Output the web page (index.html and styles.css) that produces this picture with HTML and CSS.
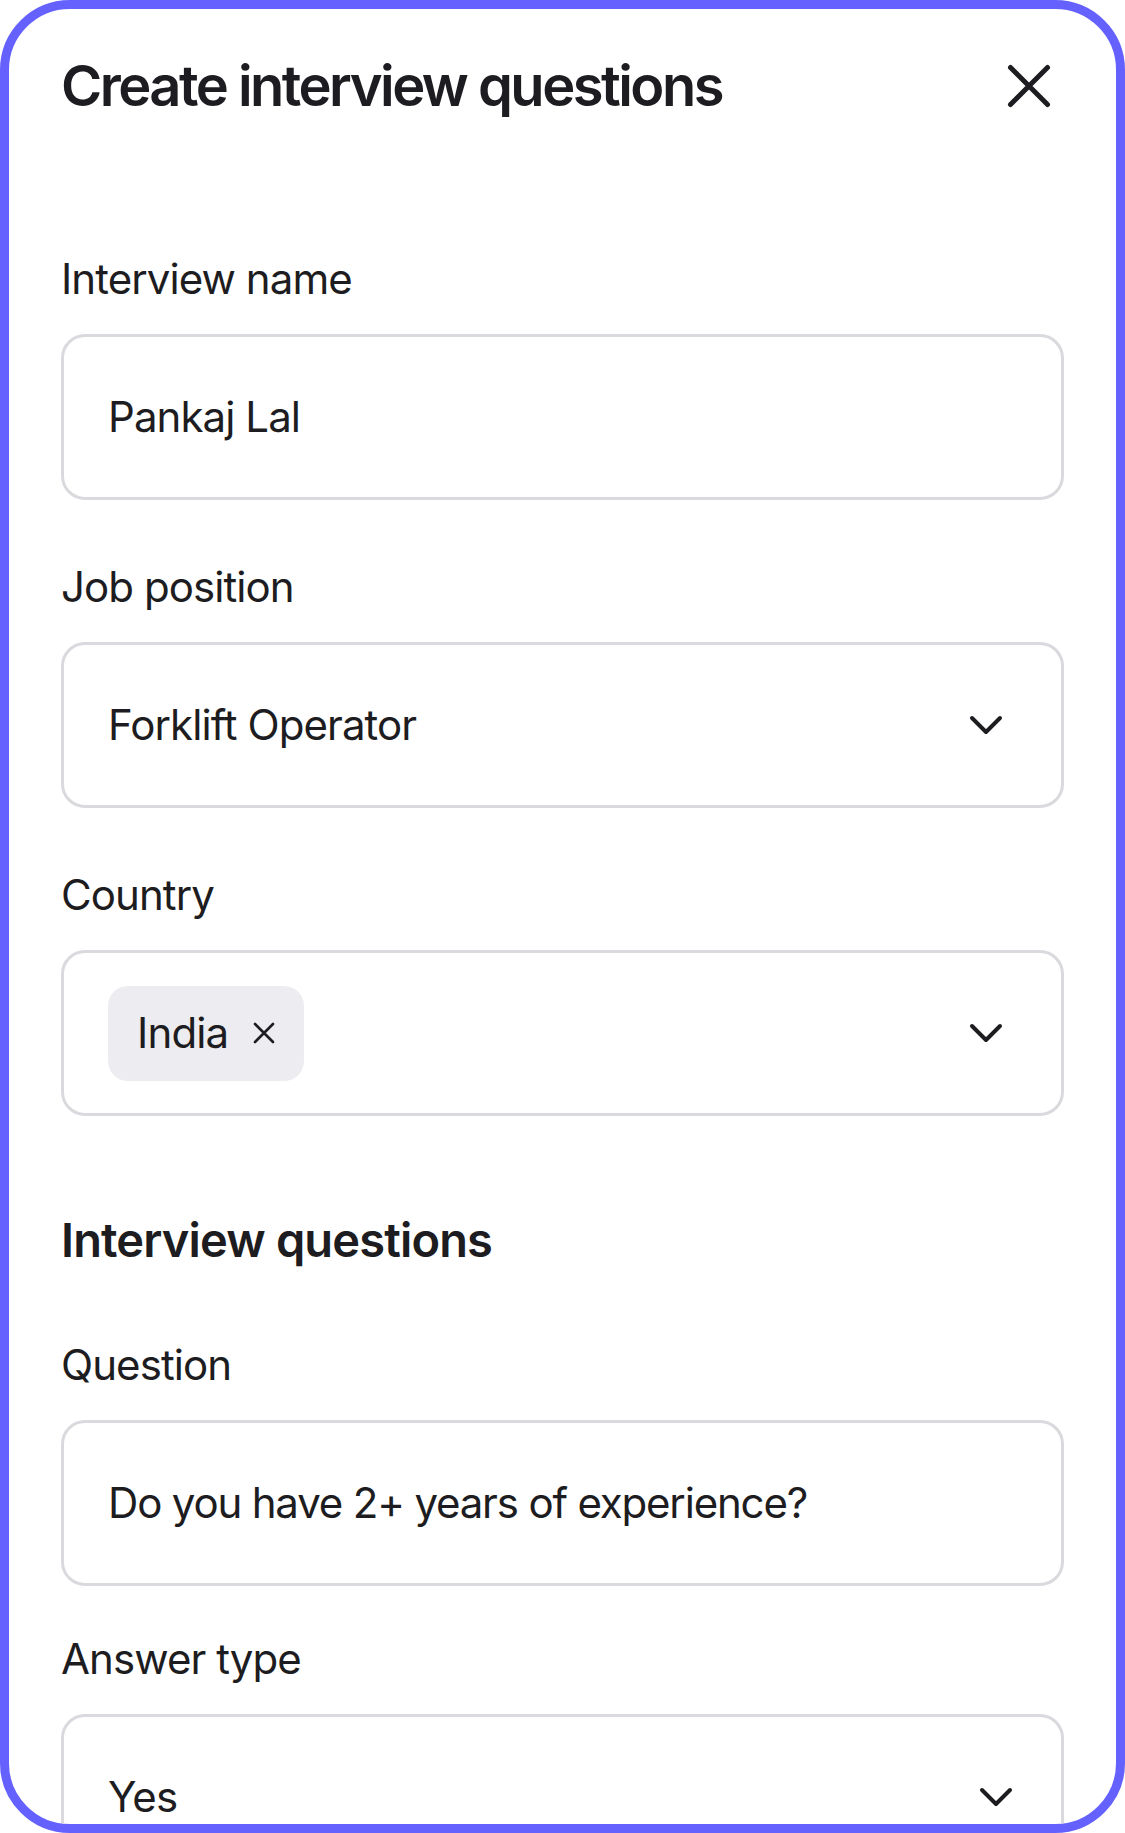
FILE: index.html
```html
<!DOCTYPE html>
<html lang="en">
<head>
<meta charset="utf-8">
<title>Create interview questions</title>
<link rel="stylesheet" href="styles.css">
</head>
<body>
<div class="frame">
  <header class="header">
    <h1 class="title">Create interview questions</h1>
    <svg class="close" viewBox="0 0 44 44" width="44" height="44" aria-label="Close">
      <path d="M3.5 3.5 L40.5 40.5 M40.5 3.5 L3.5 40.5" fill="none" stroke="#1d1c20" stroke-width="5" stroke-linecap="round"/>
    </svg>
  </header>

  <div class="field field-first">
    <div class="label">Interview name</div>
    <div class="box"><span class="value">Pankaj Lal</span></div>
  </div>

  <div class="field">
    <div class="label">Job position</div>
    <div class="box select">
      <span class="value">Forklift Operator</span>
      <svg class="chev" viewBox="0 0 34 20" width="34" height="20"><path d="M3 3 L17 17 L31 3" fill="none" stroke="#1d1c20" stroke-width="4" stroke-linecap="round" stroke-linejoin="round"/></svg>
    </div>
  </div>

  <div class="field">
    <div class="label">Country</div>
    <div class="box select">
      <span class="chip">
        <span class="chip-text">India</span>
        <svg class="chip-x" viewBox="0 0 22 22" width="22" height="22"><path d="M2 2 L20 20 M20 2 L2 20" fill="none" stroke="#1d1c20" stroke-width="2.6" stroke-linecap="round"/></svg>
      </span>
      <svg class="chev" viewBox="0 0 34 20" width="34" height="20"><path d="M3 3 L17 17 L31 3" fill="none" stroke="#1d1c20" stroke-width="4" stroke-linecap="round" stroke-linejoin="round"/></svg>
    </div>
  </div>

  <h2 class="section">Interview questions</h2>

  <div class="field field-q">
    <div class="label">Question</div>
    <div class="box"><span class="value value-q">Do you have 2+ years of experience?</span></div>
  </div>

  <div class="field field-a">
    <div class="label">Answer type</div>
    <div class="box select select-wide">
      <span class="value">Yes</span>
      <svg class="chev" viewBox="0 0 34 20" width="34" height="20"><path d="M3 3 L17 17 L31 3" fill="none" stroke="#1d1c20" stroke-width="4" stroke-linecap="round" stroke-linejoin="round"/></svg>
    </div>
  </div>
</div>
</body>
</html>
```

FILE: styles.css
```css
* { box-sizing: border-box; }

html, body {
  margin: 0;
  padding: 0;
  background: #ffffff;
}

body {
  font-family: "Inter", "Noto Sans", "Liberation Sans", sans-serif;
  color: #1d1c20;
}

.frame {
  width: 1125px;
  height: 1833px;
  border: 9px solid #6461ff;
  border-radius: 70px;
  overflow: hidden;
  background: #ffffff;
  padding: 43px 52px 0 52px;
}

.header {
  display: flex;
  align-items: center;
  justify-content: space-between;
}

.title {
  margin: 0;
  font-size: 56px;
  line-height: 68px;
  font-weight: 600;
  letter-spacing: -0.045em;
}

.close {
  display: block;
  margin-right: 13px;
}

.field {
  margin-top: 62px;
}

.field-first {
  margin-top: 134px;
}

.field-q {
  margin-top: 72px;
}

.field-a {
  margin-top: 48px;
}

.label {
  font-size: 42px;
  line-height: 50px;
  font-weight: 400;
  letter-spacing: -0.022em;
  margin-bottom: 30px;
}

.box {
  height: 166px;
  border: 3px solid #dad9dd;
  border-radius: 24px;
  display: flex;
  align-items: center;
  padding: 0 58px 0 44px;
  flex-shrink: 0;
}

.select {
  justify-content: space-between;
}

.select-wide {
  padding-right: 48px;
}

.value {
  font-size: 42px;
  line-height: 50px;
  letter-spacing: -0.022em;
}

.value-q {
  letter-spacing: -0.028em;
}

.chev {
  display: block;
  flex-shrink: 0;
}

.chip {
  display: flex;
  align-items: center;
  height: 95px;
  padding: 0 29px 0 29px;
  background: #edecf0;
  border-radius: 20px;
  gap: 25px;
}

.chip-text {
  font-size: 42px;
  line-height: 50px;
  letter-spacing: -0.02em;
}

.chip-x {
  display: block;
}

.section {
  margin: 96px 0 0 0;
  font-size: 47px;
  line-height: 56px;
  font-weight: 600;
  letter-spacing: -0.018em;
}
```
